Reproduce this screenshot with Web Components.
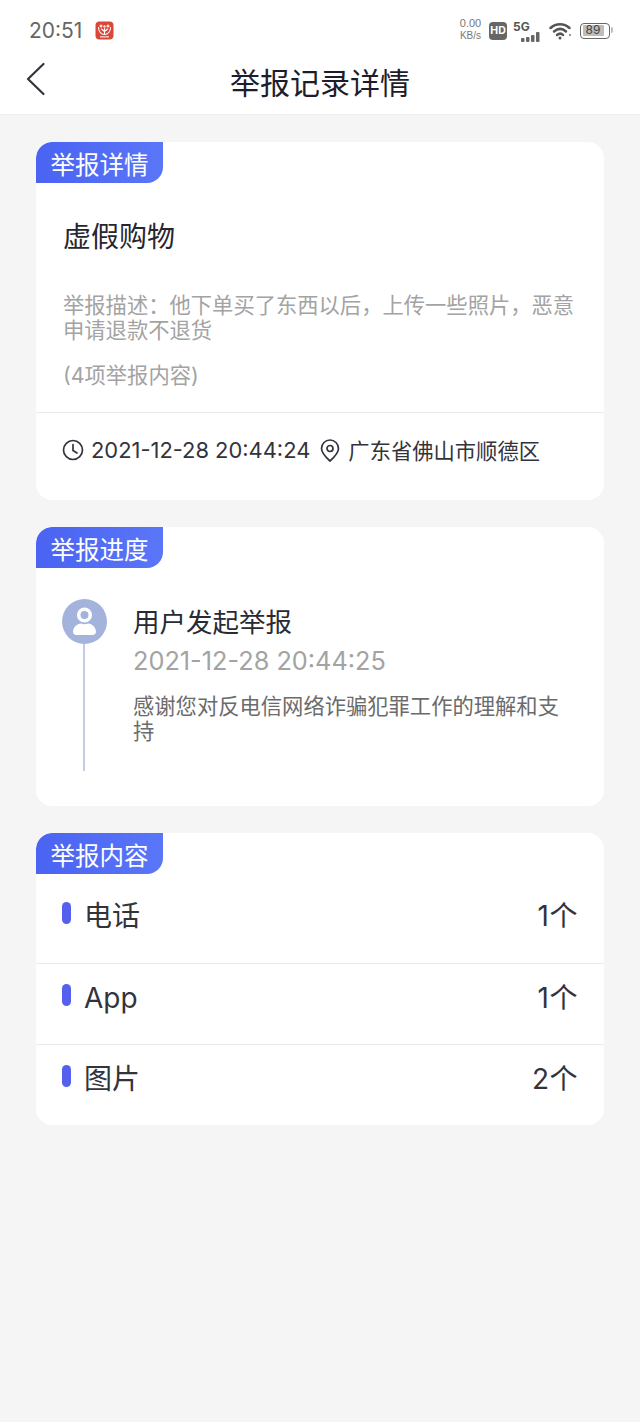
<!DOCTYPE html>
<html lang="zh">
<head>
<meta charset="utf-8">
<title>举报记录详情</title>
<style>
  html, body { margin: 0; padding: 0; }
  body {
    width: 640px;
    min-height: 1422px;
    background: #f5f5f5;
    font-family: Inter, "Noto Sans CJK SC", sans-serif;
    color: #2b2b33;
  }
</style>
</head>
<body>

<app-header title-text="举报记录详情"></app-header>

<main-column>
  <report-card label="举报详情">
    <detail-body></detail-body>
  </report-card>

  <report-card label="举报进度">
    <progress-step
      title-text="用户发起举报"
      time="2021-12-28 20:44:25"
      note="感谢您对反电信网络诈骗犯罪工作的理解和支持"></progress-step>
  </report-card>

  <report-card label="举报内容">
    <content-row name="电话" count="1个" first></content-row>
    <content-row name="App" count="1个"></content-row>
    <content-row name="图片" count="2个"></content-row>
  </report-card>
</main-column>

<script>
class AppHeader extends HTMLElement {
  connectedCallback () {
    const shadow = this.attachShadow({mode: "open"});
    shadow.innerHTML = `<style>
      :host {
        display: block;
        height: 115px;
        background: #fff;
        box-sizing: border-box;
        border-bottom: 1px solid #f0f0f0;
      }
      .status {
        height: 60px;
        display: flex;
        align-items: center;
        padding: 1px 30px 0 29px;
        box-sizing: border-box;
        color: #666;
      }
      .time { font-size: 21px; }
      .app  { margin-left: 13px; display: block; }
      .right { margin-left: auto; display: flex; align-items: center; }
      .speed {
        font-family: "Liberation Sans", sans-serif;
        color: #777;
        text-align: center; width: 23px;
        margin-bottom: 2px;
      }
      .speed span { display: block; font-size: 10px; line-height: 11.500px; }
      .speed span:first-child { font-size: 11px; line-height: 13px; }
      .hd {
        margin-left: 7px; width: 18px; height: 18px; border-radius: 4px;
        background: #666; color: #fff; font-size: 10.500px; font-weight: 700;
        display: flex; align-items: center; justify-content: center;
      }
      .net { margin-left: 6px; position: relative; width: 30px; height: 20px; }
      .net b {
        position: absolute; left: 0; top: -1px;
        font-size: 12px; line-height: 13px; font-weight: 700; color: #555;
      }
      .net svg { position: absolute; left: 7px; bottom: -1px; }
      .wifi { margin-left: 6px; display: block; }
      .battery {
        margin-left: 8px; width: 30px; height: 16px; box-sizing: border-box;
        border: 1.500px solid #666; border-radius: 4px; padding: 1.500px;
        position: relative;
      }
      .battery::after {
        content: ""; position: absolute; right: -4px; top: 3px;
        width: 2px; height: 6px; background: #bbb; border-radius: 0 2px 2px 0;
      }
      .battery span {
        display: block; width: 84%; height: 100%; background: #bdbdbd; border-radius: 1px;
        color: #444; font-size: 12px; line-height: 10px; text-align: center;
      }
      .nav {
        height: 54px;
        display: flex;
        align-items: flex-start;
        justify-content: center;
        position: relative;
      }
      .back { position: absolute; left: 26px; top: 2px; display: block; }
      h1 {
        margin: 0; font-size: 30px; font-weight: 400; color: #1d1d2b;
        line-height: 46px;
      }
    </style>
    <div class="status">
      <span class="time">20:51</span>
      <svg class="app" width="19" height="19" viewBox="0 0 19 19">
        <rect x="0.500" y="0.500" width="18" height="18" rx="4" fill="#d9463a"/>
        <path d="M9.500 13.500V7.500M9.500 10.500L6.500 8M9.500 10.500L12.500 8M3.500 6.500c0 4 2.500 7 6 7s6-3 6-7" fill="none" stroke="#fff" stroke-width="1.100" stroke-linecap="round"/>
        <g fill="#fbe3dc">
          <circle cx="6" cy="5" r="1.500"/>
          <circle cx="13" cy="5" r="1.500"/>
          <circle cx="9.500" cy="5.500" r="1.200"/>
        </g>
        <rect x="5" y="15.200" width="9" height="1.300" fill="#fbd9d0"/>
      </svg>
      <div class="right">
        <div class="speed"><span>0.00</span><span>KB/s</span></div>
        <div class="hd">HD</div>
        <div class="net">
          <b>5G</b>
          <svg width="22" height="11" viewBox="0 0 22 11" fill="#666">
            <rect x="1" y="7" width="3.500" height="4" rx="1"/>
            <rect x="6" y="6" width="3.500" height="5" rx="1"/>
            <rect x="11" y="4" width="3.500" height="7" rx="1"/>
            <rect x="16" y="1" width="3.500" height="10" rx="1"/>
          </svg>
        </div>
        <svg class="wifi" width="23" height="18" viewBox="0 0 23 18" fill="none" stroke="#555" stroke-width="2.500" stroke-linecap="round">
          <path d="M1.500 6C7 1 15 1 20.500 6"/>
          <path d="M5 9.500c4-3.300 8.500-3.300 12 0"/>
          <path d="M8 13c2-1.600 4.500-1.600 6 0"/>
          <circle cx="11" cy="16" r="1.500" fill="#555" stroke="none"/>
          <circle cx="21" cy="13" r="1" fill="#777" stroke="none"/>
        </svg>
        <div class="battery"><span>89</span></div>
      </div>
    </div>
    <div class="nav">
      <svg class="back" width="20" height="34" viewBox="0 0 20 34" fill="none" stroke="#33333d" stroke-width="2.200" stroke-linecap="round" stroke-linejoin="round">
        <path d="M17.500 2L2 17l15.500 15"/>
      </svg>
      <h1>${this.getAttribute("title-text")}</h1>
    </div>`;
  }
}

class MainColumn extends HTMLElement {
  connectedCallback () {
    const shadow = this.attachShadow({mode: "open"});
    shadow.innerHTML = `<style>
      :host {
        display: flex;
        flex-direction: column;
        gap: 27px;
        padding: 27px 36px 0;
      }
    </style><slot></slot>`;
  }
}

class ReportCard extends HTMLElement {
  connectedCallback () {
    const shadow = this.attachShadow({mode: "open"});
    shadow.innerHTML = `<style>
      :host {
        display: block;
        background: #fff;
        border-radius: 16px;
        overflow: hidden;
      }
      .tag {
        width: 127px;
        height: 41px;
        box-sizing: border-box;
        padding-top: 3px;
        line-height: 41px;
        text-align: center;
        font-size: 24.500px;
        color: #fff;
        background: linear-gradient(90deg, #4a63f2, #5a76f8);
        border-radius: 16px 0 16px 0;
      }
    </style>
    <div class="tag">${this.getAttribute("label")}</div>
    <slot></slot>`;
  }
}

class DetailBody extends HTMLElement {
  connectedCallback () {
    const shadow = this.attachShadow({mode: "open"});
    shadow.innerHTML = `<style>
      :host { display: block; }
      .top { padding: 33px 28px 22px 27px; }
      h2 {
        margin: 0; font-size: 28px; font-weight: 400; line-height: 42px;
        color: #26262e;
      }
      p {
        margin: 35px 0 0; font-size: 21.300px; line-height: 25px; color: #a3a3a3;
      }
      p.count { margin-top: 17px; line-height: 30px; }
      .meta {
        border-top: 1px solid #e9e9e9;
        height: 88px;
        padding: 0 0 13px 26px;
        box-sizing: border-box;
        display: flex;
        align-items: center;
        font-size: 21.900px;
        color: #33333b;
      }
      svg { display: block; flex: none; }
      .time { margin-left: 7px; }
      .pin { margin-left: 10px; }
      .place { margin-left: 8px; font-size: 21.300px; margin-top: -1px; }
    </style>
    <div class="top">
      <h2>虚假购物</h2>
      <p>举报描述&#xFF1A;他下单买了东西以后&#xFF0C;上传一些照片&#xFF0C;恶意申请退款不退货</p>
      <p class="count">(4项举报内容)</p>
    </div>
    <div class="meta">
      <svg width="22" height="22" viewBox="0 0 22 22" fill="none" stroke="#33333b" stroke-width="1.700" stroke-linecap="round" stroke-linejoin="round">
        <circle cx="11" cy="11" r="9.500"/>
        <path d="M11 5.500V11.500L15 14"/>
      </svg>
      <span class="time">2021-12-28 20:44:24</span>
      <svg class="pin" width="20" height="23" viewBox="0 0 20 23" fill="none" stroke="#33333b" stroke-width="1.700" stroke-linejoin="round">
        <path d="M10 22C5 17.500 1.500 14 1.500 9.500a8.500 8.500 0 0 1 17 0C18.500 14 15 17.500 10 22z"/>
        <circle cx="10" cy="9.500" r="3"/>
      </svg>
      <span class="place">广东省佛山市顺德区</span>
    </div>`;
  }
}

class ProgressStep extends HTMLElement {
  connectedCallback () {
    const shadow = this.attachShadow({mode: "open"});
    shadow.innerHTML = `<style>
      :host {
        display: grid;
        grid-template-columns: 45px 1fr;
        column-gap: 26px;
        padding: 31px 44px 35px 26px;
      }
      .rail { display: flex; flex-direction: column; align-items: flex-start; }
      .dot  { display: block; flex: none; }
      .line { width: 2px; height: 127px; margin-left: 21px; background: #c3cbe5; }
      h3 {
        margin: 1px 0 0; font-size: 26.500px; font-weight: 400; line-height: 45px;
        color: #2a2a32;
      }
      .when { margin-top: -1px; font-size: 25.300px; line-height: 34px; color: #a3a3a3; }
      p {
        margin: 16px 0 0; font-size: 21.300px; line-height: 25px; color: #6b6b6b;
      }
    </style>
    <div class="rail">
      <svg class="dot" width="45" height="45" viewBox="0 0 45 45">
        <circle cx="22.500" cy="22.500" r="22.500" fill="#a3b3dc"/>
        <circle cx="22.500" cy="16" r="5.800" fill="none" stroke="#fff" stroke-width="3.600"/>
        <path d="M11 33c0-5 4-8 8-8.500 2 1 5 1 7 0 4 .5 8 3.500 8 8.500 0 2-2 3-3 3H14c-1 0-3-1-3-3z" fill="#fff"/>
      </svg>
      <div class="line"></div>
    </div>
    <div>
      <h3>${this.getAttribute("title-text")}</h3>
      <div class="when">${this.getAttribute("time")}</div>
      <p>${this.getAttribute("note")}</p>
    </div>`;
  }
}

class ContentRow extends HTMLElement {
  connectedCallback () {
    const shadow = this.attachShadow({mode: "open"});
    const first = this.hasAttribute("first");
    shadow.innerHTML = `<style>
      :host {
        display: flex;
        align-items: flex-start;
        box-sizing: border-box;
        height: ${first ? 89 : 81}px;
        padding: ${first ? 22 : 14}px 26px 0;
        font-size: 28px;
        line-height: 40px;
        color: #33333b;
        ${first ? "" : "border-top: 1px solid #e9e9e9;"}
      }
      i {
        display: block; width: 9px; height: 22px; margin: 6px 13px 0 0;
        border-radius: 5px; background: #5560ee;
      }
      .count { margin-left: auto; letter-spacing: 0.500px; }
    </style>
    <i></i><span>${this.getAttribute("name")}</span>
    <span class="count">${this.getAttribute("count")}</span>`;
  }
}

customElements.define("app-header", AppHeader);
customElements.define("main-column", MainColumn);
customElements.define("report-card", ReportCard);
customElements.define("detail-body", DetailBody);
customElements.define("progress-step", ProgressStep);
customElements.define("content-row", ContentRow);
</script>
</body>
</html>
